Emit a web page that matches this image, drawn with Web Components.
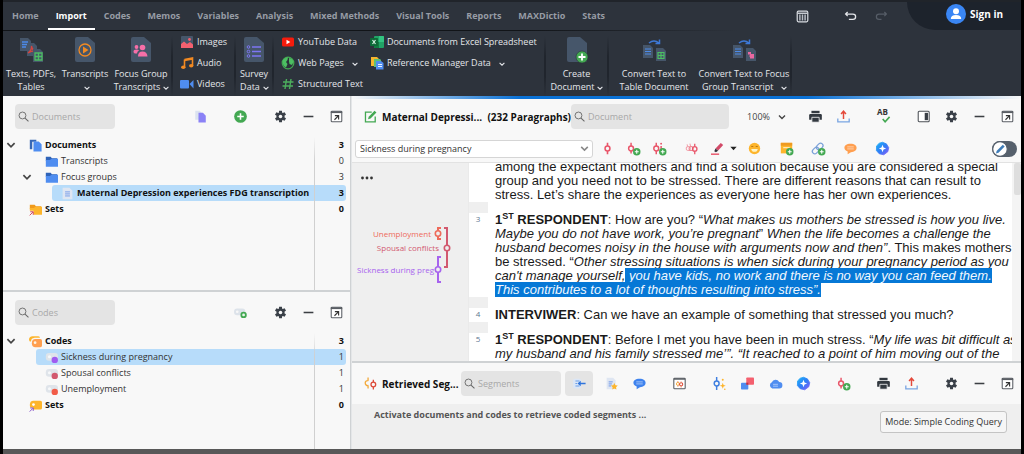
<!DOCTYPE html>
<html lang="en">
<head>
<meta charset="utf-8">
<meta name="viewport" content="width=device-width, initial-scale=1">
<title>Document coding workspace</title>
<style>
  html, body { margin: 0; height: 100%; background: #000; }
  body { font: 9px/12px "Open Sans", "Noto Sans", sans-serif; color: #222; }
</style>
</head>
<body>
<qd-app></qd-app>
<script>
const page = 'fill="#46566a"';
const addBadge = '<circle cx="12" cy="12" r="4.6" fill="#43a852"/><path d="M12 9.6v4.8M9.6 12h4.8" stroke="#fff" stroke-width="1.3"/>';
const ICONS = {
  chevron: ['0 0 10 10', '<path d="M2 3.5l3 3 3-3" fill="none" stroke="currentColor" stroke-width="1.4"/>'],
  caret: ['0 0 10 10', '<path d="M1.5 3h7L5 7z" fill="#222"/>'],
  search: ['0 0 16 16', '<circle cx="6.5" cy="6.5" r="5" fill="none" stroke="#666" stroke-width="1.3"/><path d="M10.2 10.2l5 5" stroke="#666" stroke-width="1.5"/>'],
  gear: ['0 0 16 16', '<g fill="#3a4048"><circle cx="8" cy="8" r="5"/><path d="M6.3 1h3.4l.5 3.5H5.8z"/><path d="M6.3 15h3.4l.5-3.5H5.8z"/><path d="M1.2 5.9l1.7-3 3.2 1.200-2 3.400z"/><path d="M14.800 5.900l-1.700-3-3.200 1.200 2 3.400z"/><path d="M1.200 10.100l1.700 3 3.200-1.200-2-3.400z"/><path d="M14.800 10.100l-1.700 3-3.200-1.200 2-3.400z"/></g><circle cx="8" cy="8" r="2.200" fill="#f8f8f8"/>'],
  minus: ['0 0 16 16', '<path d="M2 8h12" stroke="#3c3f44" stroke-width="1.900"/>'],
  popout: ['0 0 16 16', '<rect x="1.500" y="1.500" width="13" height="13" rx="1" fill="#fff" stroke="#5a5e64" stroke-width="1.300"/><path d="M1 2.700h14" stroke="#5a5e64" stroke-width="2.200"/><path d="M5.500 12l4.500-4.500M6 7h4.600v4.600" fill="none" stroke="#333" stroke-width="1.400"/>'],
  copydocs: ['0 0 16 16', '<path d="M1.500 1h5.500l3 3v8h-8.500z" fill="#dce3f0"/><path d="M5.500 3.500h5.500l3.500 3.500v8.500h-9z" fill="#8b82f6"/>'],
  add: ['0 0 16 16', '<circle cx="8" cy="8" r="7.800" fill="#43a852"/><path d="M8 4v8M4 8h8" stroke="#fff" stroke-width="1.900"/>'],
  tagadd: ['0 0 16 16', '<rect x="0" y="3" width="14" height="8.500" rx="4" fill="#dde3ea"/><circle cx="4" cy="7" r="1.600" fill="#f8f8f8"/><circle cx="11.800" cy="11" r="3.900" fill="#43a852"/><circle cx="11.800" cy="11" r="1.700" fill="#e8f6ea"/>'],
  docs: ['0 0 16 16', '<path d="M1 1h8v2.500H4v9H1z" fill="#3767b5"/><path d="M5.500 3h6.500l3.500 3.500v9h-10z" fill="#4f8df0"/>'],
  folder: ['0 0 16 16', '<path d="M1 2h6l1.500 2H15v3H1z" fill="#2f63b8"/><path d="M1 6h5l2-1.500h8V14.500H1z" fill="#4f8df0"/>'],
  page: ['0 0 16 16', '<path d="M2 1h8.500l3.500 3.500V15H2z" fill="#dfe6f2"/><path d="M5 6h6M5 8.500h6M5 11h6" stroke="#6f97e8" stroke-width="1.100"/>'],
  setfolder: ['0 0 16 16', '<path d="M1 2h6l1.500 2H15v3H1z" fill="#f09a1c"/><path d="M1 6h5l2-1.500h8V14.500H1z" fill="#fdb52c"/><path d="M0 9.500h5.500v6.500H0z" fill="#f8f8f8"/><path d="M.8 15.200l4-4M1.500 10.800h3.700v3.700" stroke="#d2465e" stroke-width="1.200" fill="none"/>'],
  tags: ['0 0 16 16', '<path d="M0 6q0-4.500 4.500-4.500h7q2 0 2 2H7Q2.500 4 2.500 8H1z" fill="#fdb52c"/><path d="M8 5h6q2 0 2 2v6q0 2-2 2H8q-4.500 0-4.500-5T8 5z" fill="#ff9f50"/><circle cx="7.500" cy="9.500" r="1.700" fill="#fff3e0"/>'],
  settag: ['0 0 16 16', '<path d="M5.500 2H14q2 0 2 2v7q0 2-2 2H5.500Q1 13 1 7.500T5.500 2z" fill="#fdb52c"/><circle cx="5.500" cy="6.800" r="1.700" fill="#fff"/><path d="M0 10.500h5v5.500H0z" fill="#f8f8f8"/><path d="M.8 15.500l4-4M1.500 11h3.700v3.700" stroke="#8755c7" stroke-width="1.200" fill="none"/>'],
  code: ['0 0 16 16', '<rect x="1" y="2.500" width="15" height="9.500" rx="4" fill="#dfe4ea"/><circle cx="5.500" cy="7" r="1.900" fill="#f6f8fa"/><circle cx="12" cy="11" r="3.900" fill="var(--dot)"/>'],
  edit: ['0 0 16 16', '<path d="M9.500 2.500H1.800v12h12V8" fill="none" stroke="#43a852" stroke-width="1.600"/><path d="M5 11.500l.8-3.200L13 1l2.300 2.200-7.200 7.300z" fill="#43a852"/>'],
  print: ['0 0 16 16', '<path d="M3 1h10v3H3z" fill="#333940"/><path d="M1.500 5h13q1.300 0 1.300 1.500V12H.2V6.500Q.2 5 1.500 5z" fill="#333940"/><path d="M3.500 9h9v6h-9z" fill="#333940" stroke="#f8f8f8" stroke-width="1"/>'],
  export: ['0 0 16 16', '<path d="M8 11V2M5 5l3-3.500L11 5" fill="none" stroke="#e4493b" stroke-width="1.800"/><path d="M1 10.500v4h14v-4" fill="none" stroke="#7aa5e2" stroke-width="1.600"/>'],
  spell: ['0 0 16 16', '<path d="M7 11l3 3.500 5.500-6" fill="none" stroke="#43a852" stroke-width="2"/>'],
  layout: ['0 0 16 16', '<rect x="1.500" y="1.500" width="13.500" height="13" rx="1.200" fill="#fff" stroke="#4c5056" stroke-width="1.300"/><path d="M9.500 3.500h4v9h-4z" fill="#3a3f46"/>'],
  pin: ['0 0 16 16', '<path d="M8 1v4M8 11v4" stroke="#e9566a" stroke-width="2"/><circle cx="8" cy="8" r="3" fill="none" stroke="#e9566a" stroke-width="1.900"/>'],
  pinadd: ['0 0 16 16', '<path d="M5 1v4M5 11v3" stroke="#e9566a" stroke-width="1.800"/><circle cx="5" cy="8" r="3" fill="none" stroke="#e9566a" stroke-width="1.800"/>' + addBadge],
  pininfo: ['0 0 16 16', '<path d="M4 1v4M4 11v4M10 5v4" stroke="#e9566a" stroke-width="1.800"/><circle cx="10" cy="2" r="1.200" fill="#e9566a"/><circle cx="4" cy="8" r="3" fill="none" stroke="#e9566a" stroke-width="1.800"/>' + addBadge],
  pins: ['0 0 16 16', '<g fill="none" stroke-width="1.300"><path d="M2.500 3l1 3M6 2l1 3.500" stroke="#f2a3ad"/><circle cx="4" cy="8" r="2.500" stroke="#f2a3ad"/><circle cx="7.500" cy="8" r="2.500" stroke="#ee8592"/><path d="M12 2v3.500M12 11v4" stroke="#e9566a" stroke-width="1.600"/><circle cx="12" cy="8.500" r="2.700" stroke="#e9566a" stroke-width="1.600"/></g>'],
  marker: ['0 0 16 16', '<path d="M5.500 8L12 1.300l3 2.500L8.800 10.500z" fill="#d24a68"/><path d="M4 11.500L5.500 8l3.300 2.700L6 12.500z" fill="#33323b"/><path d="M0 15h10" stroke="#e9566a" stroke-width="1.800"/>'],
  emoji: ['0 0 16 16', '<circle cx="8" cy="8" r="7" fill="#fdb52c"/><path d="M4 5.500h2.500M9.500 5.500H12" stroke="#b87610" stroke-width="1.200"/><path d="M4 8.500h8q-.5 3.500-4 3.500t-4-3.500z" fill="#fff3c4"/>'],
  noteadd: ['0 0 16 16', '<path d="M1 1h14v13H1z" fill="#fdb52c"/><path d="M1 1h14v3.500H1z" fill="#ef9a20"/><path d="M4 7h8" stroke="#fff0cc" stroke-width="1.300"/>' + addBadge],
  linkadd: ['0 0 16 16', '<g transform="rotate(-45 7 8)" fill="none" stroke="#7aa0d8" stroke-width="1.500"><rect x="-1" y="5" width="9" height="6" rx="3"/><rect x="6" y="5" width="9" height="6" rx="3"/></g>' + addBadge],
  comment: ['0 0 16 16', '<path d="M8 2c5 0 7.500 2.200 7.500 5.200S13 12.500 8.500 12.500L4.500 15v-3.200C2 11 .5 9.300.5 7.200.5 4.200 3 2 8 2z" fill="var(--c,#ff9f50)"/><path d="M4 6h8M4 8.500h8" stroke="#fff" stroke-opacity=".65" stroke-width="1"/>'],
  ai: ['0 0 16 16', '<defs><linearGradient id="g" x1="0" y1="0" x2="1" y2="1"><stop offset="0" stop-color="#1cb6f6"/><stop offset=".5" stop-color="#2f7df6"/><stop offset="1" stop-color="#8a5cf6"/></linearGradient></defs><path d="M8 .3l4.800 2 2.900 4.700-1.200 5L9.500 15.700 4 14.500.5 10.500.7 4.800 4 1.500z" fill="url(#g)" stroke="url(#g)" stroke-linejoin="round"/><path d="M8 3.500l1.300 3.200L12.500 8l-3.200 1.300L8 12.500 6.700 9.300 3.500 8l3.200-1.300z" fill="#fff"/>'],
  twopins: ['0 0 16 16', '<g fill="none" stroke-width="1.600"><path d="M5 .5v4M5 10.500V14M5.500 4.600a3 3 0 0 0-4 2.900 3 3 0 0 0 4 2.900" stroke="#f3a93a"/><path d="M11.500 3.500v3M11.500 12v3.500" stroke="#dd4b39"/><circle cx="11.500" cy="9.300" r="2.900" stroke="#dd4b39"/></g>'],
  origin: ['0 0 16 16', '<rect x="0" y="2" width="10" height="12" rx="2" fill="#dbe6f6"/><path d="M3 5h5M3 11h5M3 8h2" stroke="#6d9fe8" stroke-width="1.300"/><path d="M5.500 8l4-3.500v2.500h6v2h-6v2.500z" fill="#2f74dc"/>'],
  liststar: ['0 0 16 16', '<path d="M2 1h8l3 3v11H2z" fill="#dfe6f2"/><path d="M4.500 6h5M4.500 8.500h4M4.500 11h3" stroke="#6f97e8" stroke-width="1.200"/><path d="M11.500 7.500l1.300 2.700 2.900.4-2.100 2 .5 2.900-2.600-1.400-2.600 1.400.5-2.900-2.100-2 2.900-.4z" fill="#fdb52c"/>'],
  overview: ['0 0 16 16', '<rect x="1" y="1.500" width="14" height="13" rx="1" fill="#fff" stroke="#555a60" stroke-width="1.300"/><path d="M1 2.500h14" stroke="#555a60" stroke-width="1.700"/><circle cx="6" cy="8.500" r="1.800" fill="none" stroke="#f3a93a" stroke-width="1.200"/><circle cx="10" cy="9" r="2" fill="none" stroke="#dd4b39" stroke-width="1.300"/><path d="M10 5.500v1.500M10 11v2M6 5v1.500M6 10.500V12" stroke="#e77c50"/>'],
  pinstar: ['0 0 16 16', '<path d="M4.500 0v5M4.500 11v5" stroke="#3f7fe0" stroke-width="1.800"/><circle cx="4.500" cy="8" r="3" fill="none" stroke="#3f7fe0" stroke-width="1.800"/><path d="M12 7l1 2.700 2.700 1-2.700 1-1 2.700-1-2.700-2.700-1 2.700-1z" fill="#fdb52c"/><circle cx="12" cy="3.500" r="1.200" fill="#fdb52c"/><circle cx="14.500" cy="15" r="1" fill="#fdb52c"/>'],
  squares: ['0 0 16 16', '<rect x="0" y="7" width="9" height="8.500" rx="1" fill="#4f8df0"/><rect x="6.500" y=".5" width="9.500" height="9" rx="1" fill="#f4606f"/><path d="M6.500 7H9v2.500H6.500z" fill="#b3334a"/>'],
  cloud: ['0 0 16 16', '<path d="M4 14a4 4 0 0 1-.5-7.500A5 5 0 0 1 12.500 6 4 4 0 0 1 12.500 14z" fill="#4f8df0"/><path d="M5 9h6M5 11.300h6" stroke="#b8d2fb" stroke-width="1"/>'],
  grid: ['0 0 16 16', '<rect x="1.500" y="1.500" width="13" height="13" rx="1.500" fill="none" stroke="#d9dde2" stroke-width="1.500"/><path d="M2 4h12" stroke="#d9dde2" stroke-width="1.600"/><path d="M4.800 5.500v7.500M8 5.500v7.500M11.200 5.500v7.500" stroke="#b9bec5" stroke-width="1.800"/>'],
  undo: ['0 0 16 16', '<path d="M4.500 2.500L2 5l2.500 2.500M2 5h9a3.300 3.300 0 0 1 0 6.600H6" fill="none" stroke="currentColor" stroke-width="1.600"/>'],
  redo: ['0 0 16 16', '<path d="M11.500 2.500L14 5l-2.500 2.500M14 5H5a3.300 3.300 0 0 0 0 6.600h3" fill="none" stroke="currentColor" stroke-width="1.500"/>'],
  user: ['0 0 20 20', '<circle cx="10" cy="10" r="10" fill="#3a86f4"/><circle cx="10" cy="7.300" r="3" fill="#fff"/><path d="M4.800 15q0-4 5.200-4t5.200 4z" fill="#fff"/>'],
  pencil: ['0 0 16 16', '<circle cx="8" cy="8" r="7.300" fill="#fff" stroke="#56606c" stroke-width="1.200"/><path d="M4 12.500l.6-2.500 6.200-6.300 1.900 1.800-6.200 6.300z" fill="#3e7cb8"/>'],
  ellipsis: ['0 0 12 12', '<g fill="#333"><circle cx="1.500" cy="6" r="1.400"/><circle cx="6" cy="6" r="1.400"/><circle cx="10.500" cy="6" r="1.400"/></g>'],
  texts: ['0 0 28 28', `<path d="M3 2h8l3 3v10H3z" ${page}/><path d="M5 6h6M5 8.500h6M5 11h4" stroke="#4c8bea" stroke-width="1.300"/><path d="M10 7h7l3 3v10H10z" ${page}/><path d="M11 17q4-3 3.500-7 1 5 4.500 5-4-.5-8 2z" fill="none" stroke="#d5443f" stroke-width="1.300"/><path d="M16 13h7l3 3v10H16z" ${page}/><path d="M18 17h7v7h-7zM18 20.500h7M21.500 17v7" fill="none" stroke="#4cbf62" stroke-width="1.300"/>`],
  play: ['0 0 28 28', `<path d="M4 3q0-2 2-2h11l7 6v17q0 2-2 2H6q-2 0-2-2z" ${page}/><circle cx="14" cy="14" r="6" fill="none" stroke="#f28a22" stroke-width="1.300"/><path d="M12 10.500l5.500 3.500-5.500 3.500z" fill="#f28a22"/>`],
  people: ['0 0 28 28', `<path d="M4 3q0-2 2-2h11l7 6v17q0 2-2 2H6q-2 0-2-2z" ${page}/><g fill="#f76fa8"><circle cx="15.500" cy="11.500" r="2.800"/><path d="M11 20.500q0-5 4.500-5t5 5z"/><circle cx="9.500" cy="11" r="1.900"/><path d="M6.500 15.500q0-2 3-2 2 0 2.500 1-2 1-2 3H8q-1.500 0-1.500-2z"/></g>`],
  survey: ['0 0 28 28', `<path d="M4 3q0-2 2-2h11l7 6v17q0 2-2 2H6q-2 0-2-2z" ${page}/><path d="M12 11h9M12 15.500h9M12 20h9" stroke="#7e76f2" stroke-width="1.500"/><g fill="none" stroke="#7e76f2"><circle cx="8.500" cy="11" r="1.300"/><circle cx="8.500" cy="15.500" r="1.300"/><circle cx="8.500" cy="20" r="1.300"/></g>`],
  create: ['0 0 28 28', `<path d="M4 3q0-2 2-2h11l7 6v17q0 2-2 2H6q-2 0-2-2z" ${page}/><circle cx="19" cy="21" r="6" fill="#43a852" stroke="#2c323b" stroke-width=".6"/><path d="M19 17.500v7M15.500 21h7" stroke="#fff" stroke-width="1.800"/>`],
  totable: ['0 0 28 28', `<path d="M3 9h7l3 3v10H3z" ${page}/><path d="M5 13h6M5 15.500h6M5 18h6" stroke="#4c8bea" stroke-width="1.200"/><path d="M16 12h7l3 3v10H16z" ${page}/><path d="M18 16.500h6v6h-6zM18 19.500h6M21 16.500v6" fill="none" stroke="#4cbf62" stroke-width="1.200"/><path d="M9 7q5-4 10 0M19.500 3.500v4h-4" fill="none" stroke="#3d78d6" stroke-width="1.500"/>`],
  tofocus: ['0 0 28 28', `<path d="M3 9h7l3 3v10H3z" ${page}/><path d="M5 13h6M5 15.500h6M5 18h6" stroke="#4c8bea" stroke-width="1.200"/><path d="M16 12h7l3 3v10H16z" ${page}/><path d="M18 16h3v2.500h-3zM20.500 18h3.500v4.500h-4v-2h-1z" fill="#e968a0"/><path d="M9 7q5-4 10 0M19.500 3.500v4h-4" fill="none" stroke="#3d78d6" stroke-width="1.500"/>`],
  image: ['0 0 14 14', '<rect x="1" y="1" width="12" height="12" rx="1" fill="#46566a"/><path d="M1 13V9l3-2.500L7 9l3-2 3 2.500V13z" fill="#f4606f"/><circle cx="9.500" cy="4.500" r="1.400" fill="#f4606f"/>'],
  music: ['0 0 14 14', '<path d="M4.500 3.500L12.500 2v8M4.500 4.500L12.500 3" fill="none" stroke="#f28a22" stroke-width="1.600"/><path d="M4.500 3.500v8" stroke="#f28a22" stroke-width="1.600"/><ellipse cx="3.300" cy="11.300" rx="2.200" ry="1.800" fill="#f28a22"/><ellipse cx="11.200" cy="9.800" rx="2.200" ry="1.800" fill="#f28a22"/>'],
  video: ['0 0 14 14', '<rect x="0" y="3" width="9" height="8.500" rx="1" fill="#4f8df0"/><path d="M9.500 7L13.500 3v8.500z" fill="#4f8df0"/>'],
  youtube: ['0 0 14 14', '<rect x="1" y="2.500" width="12" height="9" rx="1.500" fill="#f61c0d"/><path d="M5.500 4.800v4.400L9.300 7z" fill="#fff"/>'],
  globe: ['0 0 14 14', '<circle cx="7" cy="7" r="5.800" fill="#2c323b" stroke="#43a852" stroke-width="1.200"/><path d="M2 4q2-3 5-2.500L6.500 4 5 6l1.500 2L5 11.500Q2 10 1.500 7zM8 2q4 .5 4.500 4L11 9 8.500 8 8 5.500z" fill="#4cbf62"/>'],
  hash: ['0 0 14 14', '<path d="M5.500 2l-1.500 10M10 2L8.500 12M2 5h10.500M1.500 9H12" stroke="#4cae5d" stroke-width="1.400"/>'],
  excel: ['0 0 14 14', '<rect x="4" y="1" width="10" height="12" rx="1" fill="#21a366"/><path d="M9 1h4q1 0 1 1v5H9z" fill="#33c481"/><path d="M4 7h5v6H5q-1 0-1-1z" fill="#107c41"/><rect x="0" y="3" width="8" height="8" rx=".8" fill="#0e6a38"/><path d="M2.500 5l3 4M5.500 5l-3 4" stroke="#d8f3e4" stroke-width="1.200"/>'],
  refs: ['0 0 14 14', '<path d="M1 1h6l1.500 1.500V10H1z" fill="#f6b62c"/><path d="M4 3h6l1 1v7H4z" fill="#5cbf77"/><path d="M6 5h5l2.500 2v6.500H6z" fill="#4f8df0"/><path d="M8 8.500h4M8 10.500h4" stroke="#e7f0ff" stroke-width="1.200"/>'],
};

/* Registers an element whose open shadow root is built from its styles and markup. */
function element(name, css, html) {
  customElements.define(name, class extends HTMLElement {
    constructor() {
      super();
      this.attachShadow({ mode: 'open' });
    }
    connectedCallback() {
      const attr = (key, other = '') => this.getAttribute(key) ?? other;
      const template = document.createElement('template');
      template.innerHTML = `<style>:host{box-sizing:border-box}*{box-sizing:border-box}button,input,select{font:inherit;color:inherit;margin:0}${css}</style>${html(attr)}`;
      this.shadowRoot.replaceChildren(template.content.cloneNode(true));
    }
  });
}

element('qd-icon', `
  :host { display: inline-block; flex: none; width: var(--size, 13px); height: var(--size, 13px); line-height: 0; vertical-align: middle; }
  svg { display: block; width: 100%; height: 100%; overflow: visible; }`,
  a => { const [box, art] = ICONS[a('name')]; return `<svg viewBox="${box}" aria-hidden="true">${art}</svg>`; });

element('qd-tab', `
  :host { display: block; height: 100%; }
  a { display: flex; align-items: center; height: 100%; padding: 0 8px; color: #979ca5; font-weight: 700; text-decoration: none; border-bottom: 2px solid transparent; border-top: 2px solid transparent; white-space: nowrap; }
  :host([active]) a { color: #fff; border-bottom-color: #fff; }`,
  () => `<a href="#"><slot></slot></a>`);

element('qd-big', `
  :host { display: block; width: var(--w); }
  button { display: flex; flex-direction: column; align-items: center; width: 100%; padding: 6px 0 0; border: 0; background: none; color: #e4e6ea; line-height: 13px; white-space: nowrap; }
  qd-icon { --size: 28px; margin-bottom: 3px; }`,
  a => `<button><qd-icon name="${a('icon')}"></qd-icon><span><slot></slot></span></button>`);

element('qd-small', `
  :host { display: block; }
  button { display: flex; align-items: center; gap: 3px; height: 20px; padding: 0; border: 0; background: none; color: #e4e6ea; white-space: nowrap; }
  qd-icon { --size: 14px; }`,
  a => `<button><qd-icon name="${a('icon')}"></qd-icon><span><slot></slot></span></button>`);

element('qd-group', `
  :host { display: flex; flex: none; align-items: stretch; width: var(--w); border-right: 2px solid; border-image: linear-gradient(transparent 10%, #20252d 40%, #20252d 70%, transparent) 1; }`,
  () => `<slot></slot>`);

element('qd-stack', `
  :host { display: grid; align-content: start; gap: 1px; padding: 2px 0 0 7px; width: var(--w); }`,
  () => `<slot></slot>`);

element('qd-search', `
  :host { display: block; flex: none; width: var(--w, 100px); }
  label { display: flex; align-items: center; gap: 3px; height: 25px; padding: 0 4px 0 3px; background: #e4e4e4; border-radius: 4px; }
  qd-icon { --size: 11px; }
  input { flex: 1; min-width: 0; padding: 0; border: 0; outline: 0; background: none; }
  input::placeholder { color: #a8a8a8; opacity: 1; }`,
  a => `<label><qd-icon name="search"></qd-icon><input type="search" placeholder="${a('hint')}" aria-label="Search ${a('hint')}"></label>`);

element('qd-tool', `
  :host { display: block; flex: none; }
  button { position: relative; display: grid; place-items: center; width: 20px; height: 20px; padding: 0; border: 0; border-radius: 4px; background: none; }
  :host([pressed]) button { width: 28px; height: 25px; background: #e4e4e4; }
  b { position: absolute; top: 0; left: 4px; font-size: 8px; line-height: 10px; color: #333; }`,
  a => `<button aria-label="${a('label')}">${a('letters') && `<b>${a('letters')}</b>`}<qd-icon name="${a('icon')}"></qd-icon></button>`);

element('qd-tools', `
  :host { display: flex; align-items: center; gap: var(--gap, 8px); }`, () => `<slot></slot>`);

element('qd-window-tools', `:host { display: block; }`, () => `
  <qd-tools><qd-tool icon="gear" label="Settings"></qd-tool><qd-tool icon="minus" label="Minimise"></qd-tool><qd-tool icon="popout" label="Undock"></qd-tool></qd-tools>`);

element('qd-panel', `
  :host { display: flex; flex-direction: column; min-width: 0; min-height: 0; background: #f8f8f8; overflow: hidden; }
  header { display: flex; flex: none; align-items: center; height: 41px; padding: 0 4px 0 12px; }
  .tools { display: flex; align-items: center; gap: 20px; margin-left: auto; }`,
  () => `<header><slot name="lead"></slot><div class="tools"><slot name="tools"></slot></div></header><slot></slot>`);

element('qd-title', `
  :host { display: flex; align-items: center; flex: none; width: var(--w); }
  h2 { display: flex; justify-content: space-between; flex: 1; margin: 0 0 0 5px; font-size: 10px; line-height: 14px; font-weight: 700; color: #111; white-space: nowrap; }`,
  a => `<qd-icon name="${a('icon')}"></qd-icon><h2><slot></slot></h2>`);

element('qd-tree', `
  :host { position: relative; display: block; flex: 1; min-height: 0; padding-right: 4px; }
  :host::after { content: ""; position: absolute; top: 0; bottom: 0; right: 35px; width: 1px; background: linear-gradient(transparent, #d0d0d0 24px); }`,
  () => `<slot></slot>`);

element('qd-row', `
  :host { display: flex; height: 16px; line-height: 16px; padding-left: calc(var(--level, 0) * 16px); color: #333; }
  .fold { width: 16px; margin-right: 1px; display: grid; place-items: center; color: #444; }
  .body { display: flex; flex: 1; align-items: center; gap: 3px; padding: 0 2px 0 9px; border-radius: 3px; white-space: nowrap; }
  .count { margin-left: auto; }
  :host([strong]) .body { font-weight: 700; color: #111; }
  :host([selected]) .body { background: #b7dcfa; }
  .fold qd-icon { --size: 12px; }`,
  a => `<span class="fold">${a('open', null) !== null ? '<qd-icon name="chevron"></qd-icon>' : ''}</span>
    <span class="body"><qd-icon name="${a('icon')}"></qd-icon><span><slot></slot></span><span class="count">${a('count')}</span></span>`);

element('qd-paragraph', `
  :host { display: grid; grid-template-columns: 19px minmax(0, 1fr); }
  .n { background: #fff; text-align: center; font-size: 8px; line-height: 12px; color: #5b7690; padding-right: 1px; }
  .t { margin-left: 7px; font: 13px/14px "Liberation Sans", Arial, sans-serif; color: #1a1a1a; white-space: nowrap; }`,
  a => `<div class="n">${a('n')}</div><div class="t"><slot></slot></div>`);

element('qd-code-select', `
  :host { display: flex; position: relative; align-items: center; width: 238px; }
  select { width: 100%; height: 18px; padding: 0 20px 0 4px; appearance: none; background: #fff; border: 1px solid #d5d5d5; border-radius: 3px; color: #333; outline: 0; }
  qd-icon { position: absolute; right: 3px; color: #888; --size: 11px; pointer-events: none; }`,
  () => `<select aria-label="Active code"><option>Sickness during pregnancy</option><option>Spousal conflicts</option><option>Unemployment</option></select><qd-icon name="chevron"></qd-icon>`);

element('qd-switch', `
  :host { display: block; }
  label { display: flex; width: 25px; height: 16px; background: #56606c; border-radius: 8px; position: relative; }
  input { position: absolute; inset: 0; opacity: 0; }
  qd-icon { --size: 16px; }`,
  () => `<label><input type="checkbox" aria-label="Edit mode"><qd-icon name="pencil"></qd-icon></label>`);

/* The code stripes beside the text: each bracket spans the lines that carry the code. */
element('qd-code-map', `
  :host { display: block; background: #efefef; border-right: 1px solid #eaeaea; }
  button { display: block; margin: 0; padding: 8px 0 0 9px; border: 0; background: none; height: 20px; }
  svg { display: block; width: 100%; height: 120px; margin-top: 36px; overflow: visible; }
  text { text-anchor: end; font-size: 8px; }`,
  () => `<button aria-label="More"><qd-icon name="ellipsis" style="--size: 12px"></qd-icon></button>
  <svg viewBox="0 0 116 120" preserveAspectRatio="xMinYMin">
    <g fill="none" stroke-width="2">
      <path stroke="#ee6b5b" d="M89 9h-3v11h3"/><path stroke="#d2596f" d="M92 9h3v39h-3"/><path stroke="#a763ee" d="M89 38h-3v25h3"/>
    </g>
    <g fill="#efefef" stroke-width="1.600"><circle cx="86" cy="14.500" r="2.700" stroke="#ee6b5b"/><circle cx="95" cy="29" r="2.700" stroke="#d2596f"/><circle cx="86" cy="50.500" r="2.700" stroke="#a763ee"/></g>
    <text x="79" y="18" fill="#ee6b5b">Unemployment</text>
    <text x="87" y="32" fill="#d2596f">Spousal conflicts</text>
    <text x="82" y="54" fill="#a763ee">Sickness during preg</text>
  </svg>`);

element('qd-ribbon', `
  :host { display: block; flex: none; background: #2d333c; border-top: 2px solid #20242a; }
  nav { display: flex; align-items: stretch; height: 28px; padding-left: 1px; }
  .tabs { display: flex; gap: 1px; }
  .quick { display: flex; align-items: center; gap: 18px; margin-left: auto; margin-right: 19px; color: #e4e6ea; }
  .quick button, .sign { display: flex; align-items: center; padding: 0; border: 0; background: none; color: inherit; }
  .quick .first { margin-right: 17px; }
  .quick button:disabled { color: #565d67; }
  .sign { gap: 4px; width: 114px; padding: 0 0 4px 39px; background: #1d232c; border-radius: 0 0 0 28px; color: #fff; font-size: 10px; font-weight: 700; }
  .sign qd-icon { --size: 20px; }
  .ribbon { display: flex; height: 66px; }
  .ribbon::before { content: ""; position: absolute; width: 72%; height: 1px; background: linear-gradient(90deg, #111418 70%, transparent); }
  .arrow { --size: 8px; margin: 0 -2px 0 2px; }`,
  () => `
  <nav>
    <div class="tabs"><qd-tab>Home</qd-tab><qd-tab active>Import</qd-tab><qd-tab>Codes</qd-tab><qd-tab>Memos</qd-tab><qd-tab>Variables</qd-tab><qd-tab>Analysis</qd-tab><qd-tab>Mixed Methods</qd-tab><qd-tab>Visual Tools</qd-tab><qd-tab>Reports</qd-tab><qd-tab>MAXDictio</qd-tab><qd-tab>Stats</qd-tab></div>
    <div class="quick">
      <button class="first" aria-label="Layout"><qd-icon name="grid"></qd-icon></button>
      <button aria-label="Undo"><qd-icon name="undo"></qd-icon></button>
      <button aria-label="Redo" disabled><qd-icon name="redo"></qd-icon></button>
    </div>
    <button class="sign"><qd-icon name="user"></qd-icon>Sign in</button>
  </nav>
  <div class="ribbon">
    <qd-group style="--w: 170px">
      <qd-big icon="texts" style="--w: 56px">Texts, PDFs,<br>Tables</qd-big>
      <qd-big icon="play" style="--w: 52px">Transcripts<br><qd-icon class="arrow" name="chevron"></qd-icon></qd-big>
      <qd-big icon="people" style="--w: 60px">Focus Group<br>Transcripts<qd-icon class="arrow" name="chevron"></qd-icon></qd-big>
    </qd-group>
    <qd-group style="--w: 63px">
      <qd-stack><qd-small icon="image">Images</qd-small><qd-small icon="music">Audio</qd-small><qd-small icon="video">Videos</qd-small></qd-stack>
    </qd-group>
    <qd-group style="--w: 38px">
      <qd-big icon="survey" style="--w: 38px">Survey<br>Data<qd-icon class="arrow" name="chevron"></qd-icon></qd-big>
    </qd-group>
    <qd-group style="--w: 272px">
      <qd-stack style="--w: 91px"><qd-small icon="youtube">YouTube Data</qd-small><qd-small icon="globe">Web Pages &nbsp;<qd-icon class="arrow" name="chevron"></qd-icon></qd-small><qd-small icon="hash">Structured Text</qd-small></qd-stack>
      <qd-stack><qd-small icon="excel">Documents from Excel Spreadsheet</qd-small><qd-small icon="refs">Reference Manager Data &nbsp;<qd-icon class="arrow" name="chevron"></qd-icon></qd-small></qd-stack>
    </qd-group>
    <qd-group style="--w: 63px">
      <qd-big icon="create" style="--w: 63px">Create<br>Document<qd-icon class="arrow" name="chevron"></qd-icon></qd-big>
    </qd-group>
    <qd-group style="--w: 183px">
      <qd-big icon="totable" style="--w: 90px">Convert Text to<br>Table Document</qd-big>
      <qd-big icon="tofocus" style="--w: 90px">Convert Text to Focus<br>Group Transcript &nbsp;<qd-icon class="arrow" name="chevron"></qd-icon></qd-big>
    </qd-group>
  </div>`);

element('qd-app', `
  :host { display: flex; flex-direction: column; height: 100vh; padding: 0 3px; background: #000; }
  main { flex: 1; display: grid; grid-template-columns: 348fr 670fr; grid-template-rows: minmax(0, 1fr); min-height: 0; background: #cfd2d4; }
  .col { display: grid; gap: 2px; min-width: 0; min-height: 0; }
  .left { grid-template-rows: minmax(0, 194fr) minmax(0, 157fr); border-right: 1px solid #cfd2d4; }
  .right { position: relative; grid-template-rows: minmax(0, 265fr) minmax(0, 86fr); border-left: 1px solid #e4e6e8; }
  .right::before { content: ""; position: absolute; z-index: 1; top: 0; left: 0; right: 0; height: 3px; background: linear-gradient(90deg, #f8f8f8, #0b72d6 25%, #0b72d6 68%, #f8f8f8); }
  .coding { display: flex; flex: none; align-items: center; gap: 12px; height: 26px; padding: 0 4px 2px 3px; border-bottom: 1px solid #e2e2e2; }
  .coding qd-switch { margin-left: auto; }
  .doc { flex: 1; display: grid; grid-template-columns: 117px minmax(0, 1fr) 9px; grid-template-rows: minmax(0, 1fr); min-height: 0; background: #fff; overflow: hidden; }
  .text { display: grid; align-content: start; gap: 11px; background: linear-gradient(90deg, #efefef 19px, #fff 19px); }
  .text qd-paragraph:first-child { margin-top: -3px; }
  mark { background: #0678d6; color: #f2f8ff; }
  sup { font-size: 9px; line-height: 0; vertical-align: 5px; }
  .bar { background: #f4f4f4; }
  .bar::before { content: ""; display: block; height: 32px; margin-left: 2px; background: #dedede; border-radius: 2px; }
  .zoom { display: flex; align-items: center; gap: 7px; color: #444; padding: 0; border: 0; background: none; }
  .zoom qd-icon { --size: 10px; margin-right: -2px; }
  .result { flex: 1; display: flex; justify-content: space-between; align-items: flex-start; padding: 4px 14px 0 22px; background: #efefef; }
  .result p { margin: 0; font-weight: 700; color: #555; line-height: 14px; }
  .result button { height: 22px; margin-top: 3px; padding: 0 4px; border: 1px solid #c4c4c4; border-radius: 3px; background: #f6f6f6; color: #333; }
  footer { flex: none; height: 5px; background: #585858; }`,
  () => `
  <qd-ribbon></qd-ribbon>
  <main>
    <div class="col left">
      <qd-panel>
        <qd-search slot="lead" hint="Documents"></qd-search>
        <qd-tool slot="tools" icon="copydocs" label="Activate documents"></qd-tool>
        <qd-tool slot="tools" icon="add" label="Add document"></qd-tool>
        <qd-window-tools slot="tools"></qd-window-tools>
        <qd-tree>
          <qd-row strong open icon="docs" count="3">Documents</qd-row>
          <qd-row style="--level: 1" icon="folder" count="0">Transcripts</qd-row>
          <qd-row style="--level: 1" open icon="folder" count="3">Focus groups</qd-row>
          <qd-row style="--level: 2" strong selected icon="page" count="3">Maternal Depression experiences FDG transcription</qd-row>
          <qd-row strong icon="setfolder" count="0">Sets</qd-row>
        </qd-tree>
      </qd-panel>
      <qd-panel>
        <qd-search slot="lead" hint="Codes"></qd-search>
        <qd-tool slot="tools" icon="tagadd" label="New code"></qd-tool>
        <qd-window-tools slot="tools"></qd-window-tools>
        <qd-tree>
          <qd-row strong open icon="tags" count="3">Codes</qd-row>
          <qd-row style="--level: 1; --dot: #a05cf0" selected icon="code" count="1">Sickness during pregnancy</qd-row>
          <qd-row style="--level: 1; --dot: #d2596f" icon="code" count="1">Spousal conflicts</qd-row>
          <qd-row style="--level: 1; --dot: #f25c48" icon="code" count="1">Unemployment</qd-row>
          <qd-row strong icon="settag" count="0">Sets</qd-row>
        </qd-tree>
      </qd-panel>
    </div>
    <div class="col right">
      <qd-panel>
        <qd-title slot="lead" icon="edit" style="--w: 207px"><span>Maternal Depressi...</span><span>(232 Paragraphs)</span></qd-title>
        <qd-search slot="lead" hint="Document" style="--w: 158px"></qd-search>
        <button slot="tools" class="zoom">100% <qd-icon name="chevron"></qd-icon></button>
        <qd-tools slot="tools"><qd-tool icon="print" label="Print"></qd-tool><qd-tool icon="export" label="Export"></qd-tool></qd-tools>
        <qd-tool slot="tools" icon="spell" letters="AB" label="Spelling"></qd-tool>
        <qd-tools slot="tools"><qd-tool icon="layout" label="Sidebar"></qd-tool><qd-window-tools></qd-window-tools></qd-tools>
        <div class="coding">
          <qd-code-select></qd-code-select>
          <qd-tools style="--gap: 6px; margin-left: -8px"><qd-tool icon="pin" label="Code"></qd-tool><qd-tool icon="pinadd" label="Code with new code"></qd-tool><qd-tool icon="pininfo" label="In-vivo code"></qd-tool></qd-tools>
          <qd-tools style="--gap: 6px"><qd-tool icon="pins" label="Undo coding"></qd-tool><qd-tool icon="marker" label="Highlight"></qd-tool></qd-tools>
          <qd-icon name="caret" style="--size: 9px; margin: 0 -6px 0 -10px"></qd-icon>
          <qd-tool icon="emoji" label="Emoticode"></qd-tool>
          <qd-tool icon="noteadd" label="New memo"></qd-tool>
          <qd-tool icon="linkadd" label="New link"></qd-tool>
          <qd-tool icon="comment" label="Comment"></qd-tool>
          <qd-tool icon="ai" label="AI Assist"></qd-tool>
          <qd-switch></qd-switch>
        </div>
        <div class="doc">
          <qd-code-map></qd-code-map>
          <div class="text">
            <qd-paragraph>among the expectant mothers and find a solution because you are considered a special<br>group and you need not to be stressed. There are different reasons that can result to<br>stress. Let’s share the experiences as everyone here has her own experiences.</qd-paragraph>
            <qd-paragraph n="3"><b>1<sup>ST</sup> RESPONDENT</b>: How are you? “<i>What makes us mothers be stressed is how you live.<br>Maybe you do not have work, you’re pregnant</i>” <i>When the life becomes a challenge the<br>husband becomes noisy in the house with arguments now and then”</i>. This makes mothers<br>be stressed. “<i>Other stressing situations is when sick during your pregnancy period as you<br>can't manage yourself,<mark> you have kids, no work and there is no way you can feed them.<br>This contributes to a lot of thoughts resulting into stress”. </mark></i></qd-paragraph>
            <qd-paragraph n="4"><b>INTERVIWER</b>: Can we have an example of something that stressed you much?</qd-paragraph>
            <qd-paragraph n="5"><b>1<sup>ST</sup> RESPONDENT</b>: Before I met you have been in much stress. “<i>My life was bit difficult as<br>my husband and his family stressed me’”. “It reached to a point of him moving out of the</i></qd-paragraph>
          </div>
          <div class="bar"></div>
        </div>
      </qd-panel>
      <qd-panel>
        <qd-title slot="lead" icon="twopins" style="--w: 97px">Retrieved Seg...</qd-title>
        <qd-search slot="lead" hint="Segments"></qd-search>
        <qd-tools slot="tools"><qd-tool pressed icon="origin" label="Origin"></qd-tool><qd-tool icon="liststar" label="Sort"></qd-tool><qd-tool icon="comment" label="Comments" style="--c: #3f83ee"></qd-tool></qd-tools>
        <qd-tool slot="tools" icon="overview" label="Overview"></qd-tool>
        <qd-tools slot="tools"><qd-tool icon="pinstar" label="Smart coding"></qd-tool><qd-tool icon="squares" label="Matrix"></qd-tool><qd-tool icon="cloud" label="Word cloud"></qd-tool><qd-tool icon="ai" label="AI Assist"></qd-tool></qd-tools>
        <qd-tool slot="tools" icon="pinadd" label="Autocode"></qd-tool>
        <qd-tools slot="tools"><qd-tool icon="print" label="Print"></qd-tool><qd-tool icon="export" label="Export"></qd-tool></qd-tools>
        <qd-window-tools slot="tools"></qd-window-tools>
        <div class="result">
          <p>Activate documents and codes to retrieve coded segments ...</p>
          <button>Mode: Simple Coding Query</button>
        </div>
      </qd-panel>
    </div>
  </main>
  <footer></footer>`);
</script>
</body>
</html>
